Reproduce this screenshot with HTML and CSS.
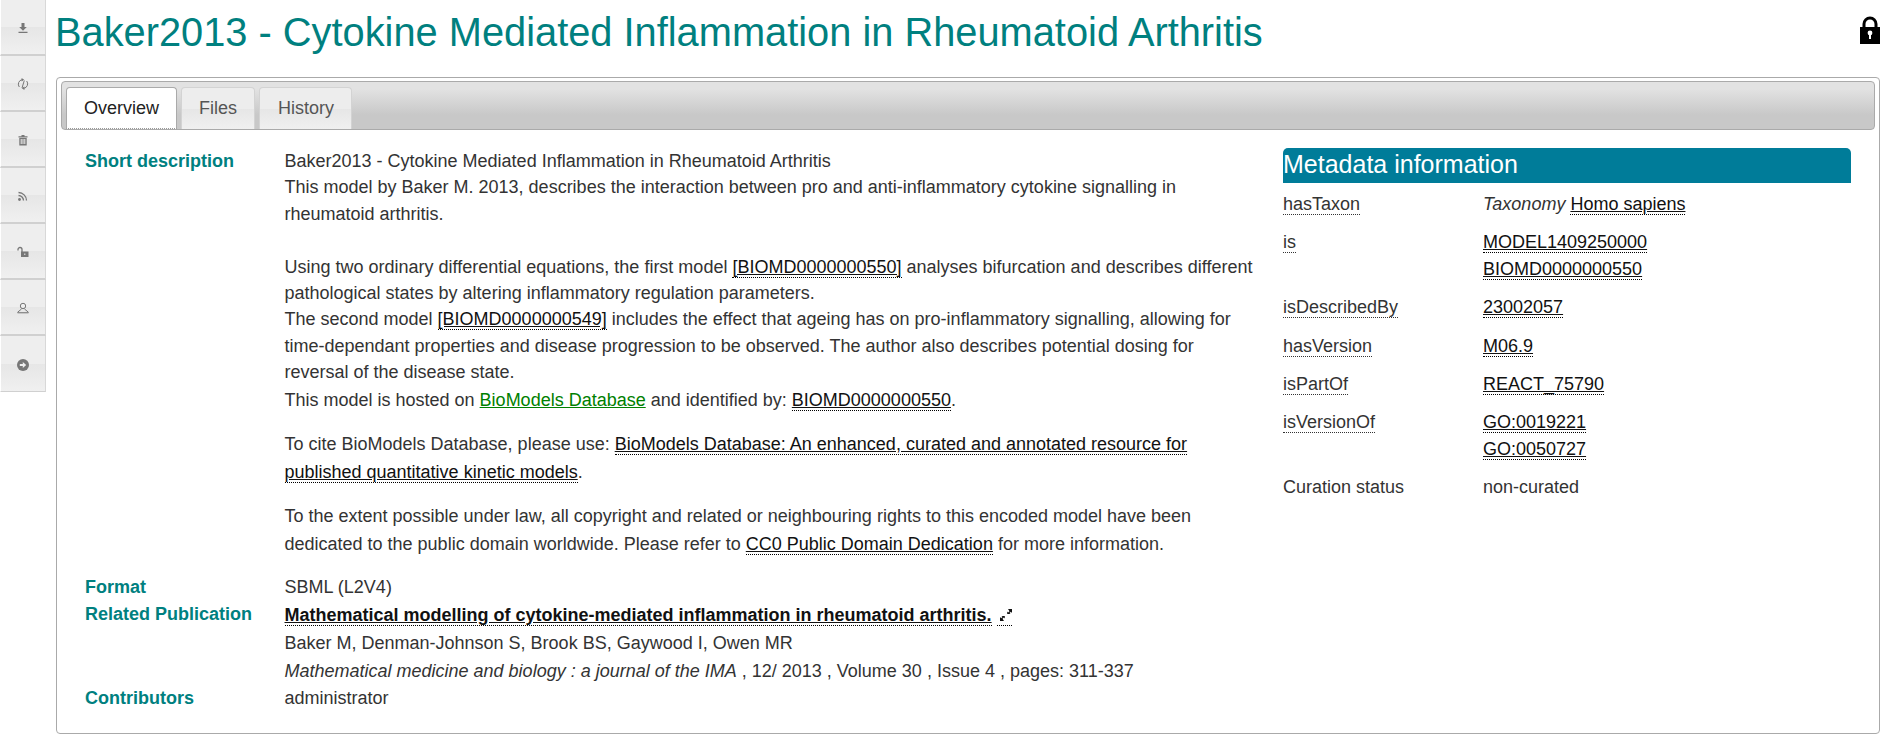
FILE: index.html
```html
<!DOCTYPE html>
<html lang="en">
<head>
<meta charset="utf-8">
<title>Baker2013 - Cytokine Mediated Inflammation in Rheumatoid Arthritis</title>
<link rel="stylesheet" href="styles.css">
</head>
<body>
<div class="page">
  <nav class="sidebar">
    <a class="side-btn"><svg class="ic" viewBox="0 0 12 12"><path d="M4.500 1h3v4h2.300L6 8.800 2.200 5h2.300zM1.500 9.800h9v1.200h-9z"/></svg></a>
    <a class="side-btn"><svg class="ic" viewBox="0 0 12 12"><path class="st thin" d="M2.300 9A4.600 4.600 0 0 1 5 1.700M9.700 3A4.600 4.600 0 0 1 7 10.300M7.300 2.500L5 10"/><path d="M4.600 0l2.600 1.800-2.600 1.800zM7.400 12L4.800 10.200l2.600-1.800z"/></svg></a>
    <a class="side-btn"><svg class="ic" viewBox="0 0 12 12"><path d="M1.500 2.300h9v1.200h-9zM4.500 1h3v1.500h-3zM2.300 4h7.400v7.500H2.300z"/><path class="cut" d="M4.200 5v5M6 5v5M7.800 5v5"/></svg></a>
    <a class="side-btn"><svg class="ic" viewBox="0 0 12 12"><circle cx="2.500" cy="9.500" r="1.400"/><path class="st" d="M1.500 5.500a5 5 0 0 1 5 5M1.500 2.500a8 8 0 0 1 8 8"/></svg></a>
    <a class="side-btn"><svg class="ic" viewBox="0 0 12 12"><path class="st" d="M1 4.500V3.500a2 2 0 0 1 4 0V6"/><path d="M4 5.500h7.500V11H4z"/><path class="cut" d="M7.800 7.500v1.500"/></svg></a>
    <a class="side-btn"><svg class="ic" viewBox="0 0 12 12"><circle class="st thin" cx="6" cy="4" r="2.700"/><path class="st thin" d="M4.500 7L.5 10.300M7.500 7l4 3.300"/><path d="M0.500 10.200h11V11.300h-11z"/></svg></a>
    <a class="side-btn"><svg class="ic" viewBox="0 0 12 12"><circle cx="6" cy="6" r="6"/><path class="cut-fill" d="M2.800 5h3V3l3.400 3-3.400 3V7h-3z"/></svg></a>
  </nav>
  <main class="main">
    <header class="head">
      <h1 class="title">Baker2013 - Cytokine Mediated Inflammation in Rheumatoid Arthritis</h1>
      <svg class="lock" viewBox="0 0 20 28"><path d="M0 11h2.500V8a7.500 7.500 0 0 1 15 0v3H20v17H0zM5.500 11h9V8a4.500 4.500 0 0 0-9 0z"/><circle class="hole" cx="10" cy="17" r="2.400"/><path class="hole" d="M9 17h2v6H9z"/></svg>
    </header>
    <section class="panel">
      <div class="tabbar">
        <a class="tab active">Overview</a>
        <a class="tab">Files</a>
        <a class="tab">History</a>
      </div>
      <div class="content">
        <div class="left">
          <div class="row">
            <div class="label">Short description</div>
            <div class="value">
              <div>Baker2013 - Cytokine Mediated Inflammation in Rheumatoid Arthritis</div>
              <div>This model by Baker M. 2013, describes the interaction between pro and anti-inflammatory cytokine signalling in rheumatoid arthritis.</div>
              <div class="blank"></div>
              <div>Using two ordinary differential equations, the first model <a class="lnk">[BIOMD0000000550]</a> analyses bifurcation and describes different pathological states by altering inflammatory regulation parameters.</div>
              <div>The second model <a class="lnk">[BIOMD0000000549]</a> includes the effect that ageing has on pro-inflammatory signalling, allowing for time-dependant properties and disease progression to be observed. The author also describes potential dosing for reversal of the disease state.</div>
              <div class="hosted">This model is hosted on <a class="green">BioModels Database</a> and identified by: <a class="lnk">BIOMD0000000550</a>.</div>
              <p class="para">To cite BioModels Database, please use: <a class="lnk">BioModels Database: An enhanced, curated and annotated resource for published quantitative kinetic models</a>.</p>
              <p class="para">To the extent possible under law, all copyright and related or neighbouring rights to this encoded model have been dedicated to the public domain worldwide. Please refer to <a class="lnk">CC0 Public Domain Dedication</a> for more information.</p>
            </div>
          </div>
          <div class="row format">
            <div class="label">Format</div>
            <div class="value">SBML (L2V4)</div>
          </div>
          <div class="row">
            <div class="label">Related Publication</div>
            <div class="value">
              <div class="pub"><a class="lnk bold">Mathematical modelling of cytokine-mediated inflammation in rheumatoid arthritis.</a> <a class="lnk ext"><svg class="expand" viewBox="0 0 12 12"><path d="M8 0h4v4l-1.200-1.200-1.300 1.300 1 1H7.200V2.500l1 1 1.300-1.300zM4 12H0V8l1.200 1.200 1.300-1.300-1-1h3.300v2.600l-1-1-1.300 1.300z"/></svg></a></div>
              <div class="pub">Baker M, Denman-Johnson S, Brook BS, Gaywood I, Owen MR</div>
              <div class="pub"><em>Mathematical medicine and biology : a journal of the IMA</em> , 12/ 2013 , Volume 30 , Issue 4 , pages: 311-337</div>
            </div>
          </div>
          <div class="row">
            <div class="label">Contributors</div>
            <div class="value">administrator</div>
          </div>
        </div>
        <aside class="meta">
          <h2 class="meta-title">Metadata information</h2>
          <div class="meta-row"><div class="meta-key"><span class="dotted">hasTaxon</span></div><div class="meta-val"><div><em>Taxonomy</em> <a class="lnk">Homo sapiens</a></div></div></div>
          <div class="meta-row"><div class="meta-key"><span class="dotted">is</span></div><div class="meta-val"><div><a class="lnk">MODEL1409250000</a></div><div><a class="lnk">BIOMD0000000550</a></div></div></div>
          <div class="meta-row"><div class="meta-key"><span class="dotted">isDescribedBy</span></div><div class="meta-val"><div><a class="lnk">23002057</a></div></div></div>
          <div class="meta-row"><div class="meta-key"><span class="dotted">hasVersion</span></div><div class="meta-val"><div><a class="lnk">M06.9</a></div></div></div>
          <div class="meta-row"><div class="meta-key"><span class="dotted">isPartOf</span></div><div class="meta-val"><div><a class="lnk">REACT_75790</a></div></div></div>
          <div class="meta-row"><div class="meta-key"><span class="dotted">isVersionOf</span></div><div class="meta-val"><div><a class="lnk">GO:0019221</a></div><div><a class="lnk">GO:0050727</a></div></div></div>
          <div class="meta-row"><div class="meta-key">Curation status</div><div class="meta-val"><div>non-curated</div></div></div>
        </aside>
      </div>
    </section>
  </main>
</div>
</body>
</html>
```
FILE: styles.css
```css
* { box-sizing: border-box; }
html, body { margin: 0; padding: 0; background: #fff; }
body { font-family: "Liberation Sans", Arial, sans-serif; font-size: 18px; line-height: 26.4px; color: #333; height: 743px; overflow: hidden; }
.page { display: flex; align-items: flex-start; }
.sidebar { width: 46px; flex: none; display: flex; flex-direction: column; }
.side-btn { height: 56px; padding-top: 2px; border: 1px solid #d8d8d8; border-left: 1px solid #fff; border-top: 0; border-bottom: 2px solid #d0d0d0; display: flex; align-items: center; justify-content: center; background: linear-gradient(#eeeeee 0, #eeeeee 50%, #e6e6e6 50%, #f0f0f0 100%); }
.side-btn:last-child { border-bottom-width: 1px; }
.ic { width: 12px; height: 12px; fill: #777; }
.st { fill: none; stroke: #777; stroke-width: 1.3; }
.st.thin { stroke-width: 1; }
.cut { fill: none; stroke: #eee; stroke-width: 1; }
.cut-fill { fill: #eee; }
.main { flex: 1; min-width: 0; padding: 0 10px; }
.head { height: 77px; display: flex; justify-content: space-between; padding-top: 4px; }
.title { margin: 0 0 0 -1px; font-size: 39.8px; line-height: 56px; font-weight: 400; color: #00807f; }
.lock { width: 20px; height: 28px; margin-top: 12px; fill: #000; fill-rule: evenodd; }
.lock .hole { fill: #fff; }
.panel { height: 657px; border: 1px solid #aaa; border-radius: 4px; padding: 3px 4px 0 4px; }
.tabbar { height: 49px; border: 1px solid #aaa; border-radius: 4px; background: linear-gradient(#e2e2e2 0, #e2e2e2 15%, #c8c8c8 70%, #c8c8c8 100%); padding: 5px 0 0 4px; display: flex; gap: 4px; align-items: flex-start; }
.tab { height: 42px; padding: 0 17px; border: 1px solid #d3d3d3; border-bottom: 0; border-radius: 4px 4px 0 0; line-height: 41px; color: #555; background: linear-gradient(#ededed 0, #ededed 50%, #e6e6e6 50%, #f0f0f0 100%); }
.tab:last-child { padding-left: 18px; }
.tab.active { background: #fff; color: #222; border-color: #aaa; border-bottom: 1px dotted #999; }
.content { display: flex; padding: 18px 24px 0 24px; }
.left { width: 1173px; flex: none; }
.row { display: flex; }
.row.format { margin-top: 16px; height: 27.4px; }
.label { width: 199.5px; flex: none; font-weight: 700; color: #00807f; }
.value { flex: 1; min-width: 0; }
.blank { height: 26.4px; }
.hosted { margin-top: 1px; }
.para { margin: 17px 0 0; line-height: 28px; }
.para + .para { margin-top: 16px; }
.pub { line-height: 28px; }
.lnk { color: #111; border-bottom: 1px dotted #000; text-decoration: underline; }
.bold { font-weight: 700; }
.ext { text-decoration: none; }
.expand { width: 12px; height: 12px; fill: #111; margin-left: 3px; }
.green { color: #008000; text-decoration: underline; }
.meta { margin-left: 25px; width: 568px; flex: none; }
.meta-title { margin: 0 0 8px; height: 35px; background: #007c99; color: #fff; border-radius: 5px 5px 0 0; font-size: 25px; line-height: 33px; font-weight: 400; }
.meta-row { display: flex; margin-bottom: 12px; }
.meta-key { width: 200px; flex: none; }
.meta-val { flex: 1; }
.dotted { border-bottom: 1px dotted #333; }
```
